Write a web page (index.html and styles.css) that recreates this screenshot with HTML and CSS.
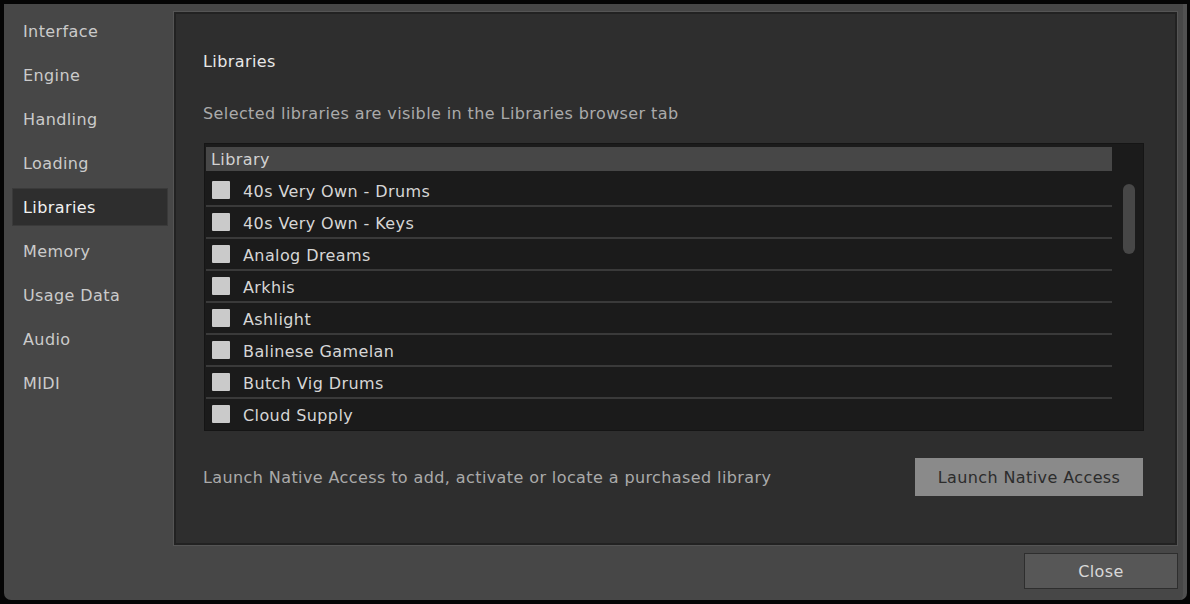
FILE: index.html
```html
<!DOCTYPE html>
<html>
<head>
<meta charset="utf-8">
<link rel="stylesheet" href="styles.css">
</head>
<body>
<div class="window">
  <div class="body">
    <nav class="sidebar">
      <div class="nav-item">Interface</div>
      <div class="nav-item">Engine</div>
      <div class="nav-item">Handling</div>
      <div class="nav-item">Loading</div>
      <div class="nav-item active">Libraries</div>
      <div class="nav-item">Memory</div>
      <div class="nav-item">Usage Data</div>
      <div class="nav-item">Audio</div>
      <div class="nav-item">MIDI</div>
    </nav>
    <main class="panel">
      <h1 class="title">Libraries</h1>
      <p class="desc">Selected libraries are visible in the Libraries browser tab</p>
      <div class="table">
        <div class="table-main">
          <div class="thead">Library</div>
          <div class="row"><span class="check"></span><span class="name">40s Very Own - Drums</span></div>
          <div class="row"><span class="check"></span><span class="name">40s Very Own - Keys</span></div>
          <div class="row"><span class="check"></span><span class="name">Analog Dreams</span></div>
          <div class="row"><span class="check"></span><span class="name">Arkhis</span></div>
          <div class="row"><span class="check"></span><span class="name">Ashlight</span></div>
          <div class="row"><span class="check"></span><span class="name">Balinese Gamelan</span></div>
          <div class="row"><span class="check"></span><span class="name">Butch Vig Drums</span></div>
          <div class="row last"><span class="check"></span><span class="name">Cloud Supply</span></div>
        </div>
        <div class="scroll-track"><div class="scroll-thumb"></div></div>
      </div>
      <div class="footer">
        <span class="footer-text">Launch Native Access to add, activate or locate a purchased library</span>
        <button class="btn-launch">Launch Native Access</button>
      </div>
    </main>
  </div>
  <div class="bottom">
    <button class="btn-close">Close</button>
  </div>
</div>
</body>
</html>
```

FILE: styles.css
```css
html, body {
  margin: 0;
  padding: 0;
  background: #050505;
  width: 1190px;
  height: 604px;
  overflow: hidden;
}
body {
  font-family: "DejaVu Sans", "Liberation Sans", sans-serif;
  font-size: 16px;
  letter-spacing: 0.4px;
  padding: 4px 3px 4px 4px;
  box-sizing: border-box;
}
.window {
  background: #474747;
  height: 596px;
  width: 1183px;
  border-radius: 0 0 7px 7px;
  border-right: 4px solid #515151;
  box-sizing: border-box;
  display: flex;
  flex-direction: column;
  padding: 7px 5px 0 8px;
}
.body {
  display: flex;
  height: 535px;
}
.sidebar {
  width: 156px;
  display: flex;
  flex-direction: column;
  gap: 6px;
  padding-top: 1px;
  margin-right: 5px;
}
.nav-item {
  height: 38px;
  line-height: 36px;
  padding: 2px 0 0 11px;
  color: #cbcbcb;
  box-sizing: border-box;
}
.nav-item.active {
  background: #2e2e2e;
  color: #f2f2f2;
  border: 1px solid #3a3a3a;
  line-height: 34px;
  padding: 2px 0 0 10px;
}
.panel {
  flex: 1;
  background: #2e2e2e;
  border: 2px solid #222;
  box-shadow: 0 0 0 1px #555;
  margin: 1px;
  padding: 0 31px 0 27px;
  display: flex;
  flex-direction: column;
}
.title {
  font-size: 16px;
  font-weight: normal;
  color: #e8e8e8;
  margin: 37px 0 0 0;
  line-height: 22px;
}
.desc {
  color: #aaaaaa;
  margin: 30px 0 0 0;
  line-height: 22px;
}
.table {
  margin-top: 18px;
  margin-left: 1px;
  height: 288px;
  background: #1b1b1b;
  border: 1px solid #151515;
  display: flex;
  box-sizing: border-box;
  padding: 3px 0 0 1px;
}
.table-main {
  width: 906px;
}
.thead {
  height: 24px;
  line-height: 24px;
  padding-top: 1px;
  box-sizing: border-box;
  background: #474747;
  color: #d2d2d2;
  padding-left: 5px;
  margin-bottom: 4px;
}
.row {
  height: 30px;
  border-bottom: 2px solid #3a3a3a;
  display: flex;
  align-items: center;
  color: #d6d6d6;
}
.row.last {
  border-bottom: none;
}
.name {
  padding-top: 2px;
}
.check {
  width: 18px;
  height: 18px;
  background: #cacaca;
  border-radius: 1px;
  margin-left: 6px;
  margin-right: 13px;
  flex: none;
}
.scroll-track {
  flex: 1;
}
.scroll-thumb {
  width: 12px;
  height: 70px;
  background: #474747;
  border-radius: 6px;
  margin: 37px 0 0 11px;
}
.footer {
  display: flex;
  align-items: center;
  justify-content: space-between;
  margin-top: 27px;
}
.footer-text {
  color: #aaaaaa;
}
.btn-launch {
  font-family: inherit;
  font-size: 16px;
  letter-spacing: 0.4px;
  width: 228px;
  height: 38px;
  background: #8a8a8a;
  color: #2c2c2c;
  border: none;
  margin-right: 1px;
}
.bottom {
  display: flex;
  justify-content: flex-end;
  padding-top: 7px;
}
.btn-close {
  font-family: inherit;
  font-size: 16px;
  letter-spacing: 0.4px;
  width: 154px;
  height: 36px;
  background: #575757;
  color: #d8d8d8;
  border: 1px solid #2e2e2e;
}
```
